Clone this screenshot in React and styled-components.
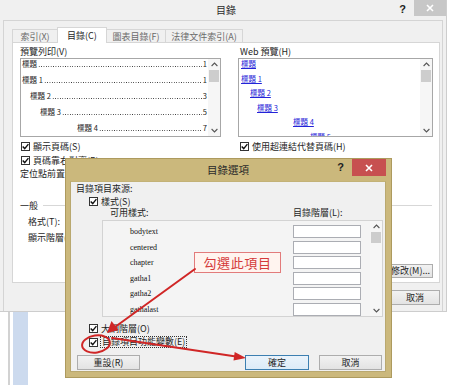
import React from "react";
import styled, { createGlobalStyle } from "styled-components";

const UI = `"Noto Sans CJK TC", "Noto Sans CJK SC", "Noto Sans", sans-serif`;

const Global = createGlobalStyle`
  html, body { margin: 0; padding: 0; background: #fff; }
  body { width: 450px; height: 385px; overflow: hidden; font-family: ${UI}; }
  * { box-sizing: border-box; }
`;

const Page = styled.div`
  position: relative;
  width: 450px;
  height: 385px;
  overflow: hidden;
  background: #fff;
`;

/* ---------- main window ---------- */
const Win = styled.div`
  width: 447px;
  height: 312px;
  background: #f0f0f0;
  border-right: 1px solid #cdcdcd;
  border-bottom: 1px solid #cdcdcd;
  display: flex;
  flex-direction: column;
  font-family: ${UI};
  font-size: 9px;
  color: #1e1e1e;
`;

const TitleBar = styled.div`
  height: ${(p) => p.$h}px;
  flex: none;
  display: grid;
  grid-template-columns: 1fr auto 1fr;
  align-items: start;
`;

const TitleText = styled.div`
  grid-column: 2;
  font-size: ${(p) => p.$size}px;
  line-height: ${(p) => p.$h}px;
  padding-left: ${(p) => p.$shift || 0}px;
  color: #2a2a2a;
  white-space: nowrap;
`;

const TitleTools = styled.div`
  grid-column: 3;
  display: flex;
  justify-content: flex-end;
  align-items: flex-start;
`;

const HelpMark = styled.span`
  font-family: "Liberation Sans", "DejaVu Sans", sans-serif;
  font-weight: bold;
  font-size: 11px;
  line-height: ${(p) => p.$h}px;
  margin-right: 8px;
  color: #222;
`;

const CloseBtn = styled.div`
  width: ${(p) => p.$w}px;
  height: ${(p) => p.$h}px;
  background: ${(p) => (p.$active ? "#c75050" : "#c7c7c7")};
  display: flex;
  align-items: center;
  justify-content: center;
`;

const Client = styled.div`
  flex: 1;
  margin: 0 3px;
  border: 1px solid #d4d4d4;
  border-bottom: none;
  background: #f0f0f0;
  padding: 6px 2px 0 8px;
  display: flex;
  flex-direction: column;
`;

const TabStrip = styled.div`
  height: 15px;
  display: flex;
  align-items: flex-end;
  flex: none;
`;

const Tab = styled.div`
  width: ${(p) => p.$w}px;
  height: ${(p) => (p.$active ? 16 : 13)}px;
  margin-bottom: ${(p) => (p.$active ? -1 : 0)}px;
  margin-left: -1px;
  border: 1px solid #d6d6d6;
  border-bottom: none;
  background: ${(p) => (p.$active ? "#fff" : "#f0f0f0")};
  color: ${(p) => (p.$active ? "#1e1e1e" : "#6a6a6a")};
  position: relative;
  z-index: ${(p) => (p.$active ? 1 : 0)};
  display: flex;
  align-items: center;
  justify-content: center;
  white-space: nowrap;
  &:first-child { margin-left: 0; }
`;

const Panel = styled.div`
  height: 241px;
  flex: none;
  border: 1px solid #d6d6d6;
  background: #fff;
  padding: 3px 6px 0 7px;
  display: flex;
  flex-direction: column;
`;

const TwoCols = styled.div`
  display: grid;
  grid-template-columns: 201px 195px;
  column-gap: 17px;
  margin-top: ${(p) => p.$mt || 0}px;
`;

const Col = styled.div`
  display: flex;
  flex-direction: column;
`;

const Label = styled.div`
  height: 12px;
  line-height: 12px;
  white-space: nowrap;
  padding-left: ${(p) => p.$pl || 0}px;
`;

const PreviewBox = styled.div`
  height: 79px;
  border: 1px solid #a7a7a7;
  background: #fff;
  display: flex;
  overflow: hidden;
`;

const PreviewList = styled.div`
  flex: 1;
  min-width: 0;
  display: flex;
  flex-direction: column;
  gap: ${(p) => p.$gap || 6}px;
  padding-right: 1px;
  overflow: hidden;
`;

const Entry = styled.div`
  height: 10px;
  line-height: 10px;
  flex: none;
  display: flex;
  padding-left: ${(p) => p.$indent}px;
  font-size: 7.5px;
  white-space: nowrap;
  color: #222;
`;

const Leader = styled.span`
  flex: 1;
  align-self: flex-end;
  margin: 0 1px 2px 1px;
  height: 1px;
  background-image: radial-gradient(circle, #333 0.6px, transparent 0.7px);
  background-size: 2.4px 1px;
  background-repeat: repeat-x;
`;

const LinkEntry = styled.span`
  color: #2323d8;
  text-decoration: underline;
`;

const Scroll = styled.div`
  width: 12px;
  flex: none;
  background: #f6f6f6;
  display: flex;
  flex-direction: column;
  align-items: center;
`;

const ScrollArrow = styled.div`
  height: 11px;
  flex: none;
  display: flex;
  align-items: center;
  justify-content: center;
`;

const ScrollTrack = styled.div`
  flex: 1;
  width: 100%;
  padding: 0 1px;
`;

const Thumb = styled.div`
  height: ${(p) => p.$h}px;
  background: #cdcdcd;
`;

const Row = styled.div`
  height: ${(p) => p.$h || 13.5}px;
  display: flex;
  align-items: center;
  gap: 3px;
  padding-left: ${(p) => p.$pl || 0}px;
  margin-top: ${(p) => p.$mt || 0}px;
  white-space: nowrap;
  flex: none;
`;

const Focus = styled.span`
  outline: 1px dotted #333;
  outline-offset: 0;
  padding: 0 1px;
  line-height: 10px;
`;

const BoxSq = styled.span`
  width: 9px;
  height: 9px;
  border: 1px solid #333;
  background: #fff;
  display: inline-flex;
  align-items: center;
  justify-content: center;
  flex: none;
`;

const GroupHead = styled.div`
  height: 12px;
  display: flex;
  align-items: center;
  gap: 5px;
  margin-top: 19px;
  width: 412px;
`;

const Rule = styled.div`
  flex: 1;
  border-top: 1px solid #d7d7d7;
`;

const ButtonRow = styled.div`
  display: flex;
  justify-content: flex-end;
  gap: ${(p) => p.$gap || 8}px;
  margin-top: ${(p) => p.$mt || 0}px;
  padding-left: ${(p) => p.$pl || 0}px;
  padding-right: ${(p) => p.$pr || 0}px;
`;

const Btn = styled.div`
  width: ${(p) => p.$w}px;
  height: ${(p) => p.$h || 14}px;
  border: 1px solid ${(p) => (p.$default ? "#3c7fb1" : "#adadad")};
  background: ${(p) =>
    p.$default
      ? "linear-gradient(#eaf3fb, #dcebf8)"
      : "linear-gradient(#f2f2f2, #e3e3e3)"};
  display: flex;
  align-items: center;
  justify-content: center;
  white-space: nowrap;
  margin-left: ${(p) => (p.$push ? "auto" : "0")};
  color: #1e1e1e;
`;

/* ---------- document behind ---------- */
const Doc = styled.div`
  height: 73px;
  display: flex;
`;

const DocGap = styled.div`
  width: ${(p) => p.$w}px;
  background: ${(p) => p.$c || "#fff"};
  flex: none;
`;

/* ---------- options dialog ---------- */
const OptDialog = styled.div`
  position: absolute;
  left: 65px;
  top: 158px;
  width: 327px;
  height: 220px;
  background: #cbb87c;
  border: 1px solid #ad9a5e;
  padding: 0 5px 5px 4px;
  display: flex;
  flex-direction: column;
  font-family: ${UI};
  font-size: 9px;
  color: #1e1e1e;
`;

const OptInner = styled.div`
  flex: 1;
  background: #f0f0f0;
  border: 1px solid #b9a86f;
  border-top-color: #c3b277;
  padding: 1px 2px 0 5px;
  display: flex;
  flex-direction: column;
`;

const ListHead = styled.div`
  height: 12px;
  line-height: 12px;
  display: grid;
  grid-template-columns: 183px auto;
  padding-left: 34px;
  white-space: nowrap;
`;

const StyleList = styled.div`
  height: 97px;
  margin: 1px 0 0 26px;
  border: 1px solid #d3d3d3;
  background: #f4f4f4;
  display: flex;
  flex: none;
`;

const StyleBody = styled.div`
  flex: 1;
  padding-top: 3px;
  display: flex;
  flex-direction: column;
`;

const StyleRow = styled.div`
  height: 15.5px;
  flex: none;
  display: grid;
  grid-template-columns: 190px 68px;
  align-items: center;
`;

const StyleName = styled.span`
  padding-left: 27px;
  font-family: "Liberation Serif", "DejaVu Serif", serif;
  font-size: 8px;
  color: #111;
`;

const LevelBox = styled.div`
  height: 13px;
  border: 1px solid #abadb3;
  background: #fff;
`;

const Callout = styled.div`
  position: absolute;
  left: 194px;
  top: 252px;
  width: 87px;
  height: 21px;
  background: #fff4ef;
  border: 1px solid #e27b7b;
  color: #d43a3a;
  font-family: ${UI};
  font-size: 13px;
  letter-spacing: 0.6px;
  display: flex;
  align-items: center;
  justify-content: center;
  white-space: nowrap;
`;

const Marks = styled.svg`
  position: absolute;
  left: 0;
  top: 0;
  pointer-events: none;
`;

/* ---------- small drawings ---------- */
const Check = () => (
  <BoxSq>
    <svg width="7" height="7" viewBox="0 0 7 7">
      <path d="M0.7 3.5 L2.7 5.6 L6.4 1.1" fill="none" stroke="#111" strokeWidth="1.4" />
    </svg>
  </BoxSq>
);

const Chevron = ({ down }) => (
  <svg width="7" height="5" viewBox="0 0 7 5">
    <polyline
      points={down ? "0.6,1 3.5,3.9 6.4,1" : "0.6,4 3.5,1.1 6.4,4"}
      fill="none"
      stroke="#555"
      strokeWidth="1.1"
    />
  </svg>
);

const XMark = () => (
  <svg width="8" height="8" viewBox="0 0 8 8">
    <path d="M1 1 L7 7 M7 1 L1 7" stroke="#fff" strokeWidth="1.6" />
  </svg>
);

const ScrollBar = ({ thumb }) => (
  <Scroll>
    <ScrollArrow>
      <Chevron />
    </ScrollArrow>
    <ScrollTrack>
      <Thumb $h={thumb} />
    </ScrollTrack>
    <ScrollArrow>
      <Chevron down />
    </ScrollArrow>
  </Scroll>
);

const printEntries = [
  { t: "標題", n: "1", i: 1 },
  { t: "標題 1", n: "1", i: 1 },
  { t: "標題 2", n: "3", i: 9 },
  { t: "標題 3", n: "5", i: 19 },
  { t: "標題 4", n: "7", i: 56 },
];

const webEntries = [
  { t: "標題", i: 2 },
  { t: "標題 1", i: 2 },
  { t: "標題 2", i: 11 },
  { t: "標題 3", i: 18 },
  { t: "標題 4", i: 54 },
  { t: "標題 5", i: 71 },
];

const styles = ["bodytext", "centered", "chapter", "gatha1", "gatha2", "gathalast"];

export default function App() {
  return (
    <Page>
      <Global />
      <Win>
        <TitleBar $h={20}>
          <TitleText $size={10} $h={20} $shift={6}>目錄</TitleText>
          <TitleTools>
            <HelpMark $h={18}>?</HelpMark>
            <CloseBtn $w={32} $h={16}>
              <XMark />
            </CloseBtn>
          </TitleTools>
        </TitleBar>
        <Client>
          <TabStrip>
            <Tab $w={46}>索引(X)</Tab>
            <Tab $w={50} $active>目錄(C)</Tab>
            <Tab $w={60}>圖表目錄(F)</Tab>
            <Tab $w={78}>法律文件索引(A)</Tab>
          </TabStrip>
          <Panel>
            <TwoCols>
              <Col>
                <Label>預覽列印(V)</Label>
                <PreviewBox>
                  <PreviewList>
                    {printEntries.map((e) => (
                      <Entry key={e.t} $indent={e.i}>
                        <span>{e.t}</span>
                        <Leader />
                        <span>{e.n}</span>
                      </Entry>
                    ))}
                  </PreviewList>
                  <ScrollBar thumb={12} />
                </PreviewBox>
              </Col>
              <Col>
                <Label $pl={2}>Web 預覽(H)</Label>
                <PreviewBox>
                  <PreviewList $gap={4.5}>
                    {webEntries.map((e) => (
                      <Entry key={e.t} $indent={e.i}>
                        <LinkEntry>{e.t}</LinkEntry>
                      </Entry>
                    ))}
                  </PreviewList>
                  <ScrollBar thumb={12} />
                </PreviewBox>
              </Col>
            </TwoCols>
            <TwoCols $mt={3}>
              <Col>
                <Row $pl={1}>
                  <Check />
                  <span>顯示頁碼(S)</span>
                </Row>
                <Row $pl={1}>
                  <Check />
                  <span>頁碼靠右對齊(R)</span>
                </Row>
                <Row>
                  <span>定位點前置字元(B):</span>
                </Row>
              </Col>
              <Col>
                <Row $pl={2}>
                  <Check />
                  <span>使用超連結代替頁碼(H)</span>
                </Row>
              </Col>
            </TwoCols>
            <GroupHead>
              <span>一般</span>
              <Rule />
            </GroupHead>
            <Row $h={12} $pl={8} $mt={4}>
              <span>格式(T):</span>
            </Row>
            <Row $h={12} $pl={8} $mt={4}>
              <span>顯示階層(L):</span>
            </Row>
            <ButtonRow $mt={20}>
              <Btn $w={45}>選項(O)...</Btn>
              <Btn $w={45}>修改(M)...</Btn>
            </ButtonRow>
          </Panel>
          <ButtonRow $mt={7} $gap={8}>
            <Btn $w={50} $h={15}>確定</Btn>
            <Btn $w={50} $h={15}>取消</Btn>
          </ButtonRow>
        </Client>
      </Win>
      <Doc>
        <DocGap $w={8} />
        <DocGap $w={2} $c="#d2d2d2" />
        <DocGap $w={3} />
        <DocGap $w={15} $c="#ccdaee" />
      </Doc>

      <OptDialog>
        <TitleBar $h={22}>
          <TitleText $size={10.5} $h={22}>目錄選項</TitleText>
          <TitleTools>
            <HelpMark $h={16}>?</HelpMark>
            <CloseBtn $w={34} $h={17} $active>
              <XMark />
            </CloseBtn>
          </TitleTools>
        </TitleBar>
        <OptInner>
          <Label>目錄項目來源:</Label>
          <Row $h={12} $pl={13}>
            <Check />
            <span>樣式(S)</span>
          </Row>
          <ListHead>
            <span>可用樣式:</span>
            <span>目錄階層(L):</span>
          </ListHead>
          <StyleList>
            <StyleBody>
              {styles.map((s) => (
                <StyleRow key={s}>
                  <StyleName>{s}</StyleName>
                  <LevelBox />
                </StyleRow>
              ))}
            </StyleBody>
            <ScrollBar thumb={11} />
          </StyleList>
          <Row $h={13} $pl={13} $mt={4.5}>
            <Check />
            <span>大綱階層(O)</span>
          </Row>
          <Row $h={13} $pl={13} $mt={1}>
            <Check />
            <Focus>目錄項目功能變數(E)</Focus>
          </Row>
          <ButtonRow $mt={6} $pl={1} $pr={1} $gap={10}>
            <Btn $w={63} $h={15}>重設(R)</Btn>
            <Btn $w={64} $h={15} $default $push>確定</Btn>
            <Btn $w={63} $h={15}>取消</Btn>
          </ButtonRow>
        </OptInner>
      </OptDialog>

      <Callout>勾選此項目</Callout>

      <Marks width="450" height="385" viewBox="0 0 450 385">
        <g stroke="#d02626" strokeWidth="2" fill="none" strokeLinecap="round">
          <line x1="195" y1="269" x2="115" y2="327" />
          <line x1="112" y1="338" x2="236" y2="356.5" />
          <ellipse cx="96" cy="344" rx="14" ry="8.5" transform="rotate(-8 96 344)" />
        </g>
        <g fill="#d02626">
          <polygon points="107,333 118.5,330 111.5,321" />
          <polygon points="246,358 233.5,360.5 234.7,352" />
        </g>
      </Marks>
    </Page>
  );
}
